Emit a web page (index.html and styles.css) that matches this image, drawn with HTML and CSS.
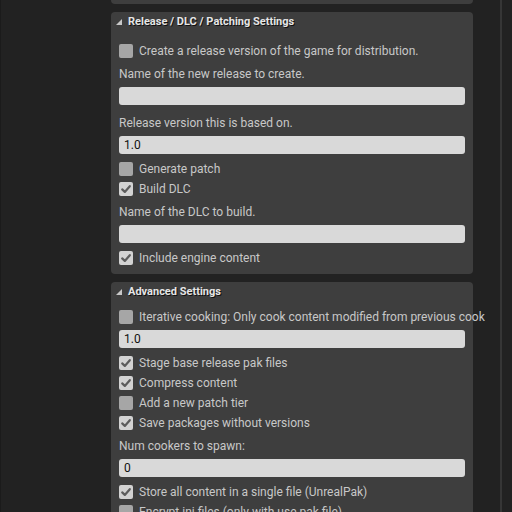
FILE: index.html
```html
<!DOCTYPE html>
<html>
<head>
<meta charset="utf-8">
<link rel="stylesheet" href="styles.css">
</head>
<body>
<div class="page">
  <div class="gutter"></div>
  <div class="column">
    <div class="panel stub"></div>

    <section class="panel">
      <div class="panel-header">
        <svg class="arrow" width="6" height="6" viewBox="0 0 6 6"><polygon points="6,0 6,6 0,6"/></svg>
        <span>Release / DLC / Patching Settings</span>
      </div>
      <div class="panel-body first">
        <div class="check-row"><span class="box"></span><span>Create a release version of the game for distribution.</span></div>
        <div class="label-row">Name of the new release to create.</div>
        <div class="input"></div>
        <div class="label-row">Release version this is based on.</div>
        <div class="input">1.0</div>
        <div class="check-row"><span class="box"></span><span>Generate patch</span></div>
        <div class="check-row"><span class="box on"><svg viewBox="0 0 14 14"><path d="M3.2 7.4 L5.8 9.9 L10.8 4.2"/></svg></span><span>Build DLC</span></div>
        <div class="label-row">Name of the DLC to build.</div>
        <div class="input"></div>
        <div class="check-row"><span class="box on"><svg viewBox="0 0 14 14"><path d="M3.2 7.4 L5.8 9.9 L10.8 4.2"/></svg></span><span>Include engine content</span></div>
      </div>
    </section>

    <section class="panel">
      <div class="panel-header">
        <svg class="arrow" width="6" height="6" viewBox="0 0 6 6"><polygon points="6,0 6,6 0,6"/></svg>
        <span>Advanced Settings</span>
      </div>
      <div class="panel-body">
        <div class="check-row"><span class="box"></span><span class="nowrap">Iterative cooking: Only cook content modified from previous cook</span></div>
        <div class="input">1.0</div>
        <div class="check-row"><span class="box on"><svg viewBox="0 0 14 14"><path d="M3.2 7.4 L5.8 9.9 L10.8 4.2"/></svg></span><span>Stage base release pak files</span></div>
        <div class="check-row"><span class="box on"><svg viewBox="0 0 14 14"><path d="M3.2 7.4 L5.8 9.9 L10.8 4.2"/></svg></span><span>Compress content</span></div>
        <div class="check-row"><span class="box"></span><span>Add a new patch tier</span></div>
        <div class="check-row"><span class="box on"><svg viewBox="0 0 14 14"><path d="M3.2 7.4 L5.8 9.9 L10.8 4.2"/></svg></span><span>Save packages without versions</span></div>
        <div class="label-row">Num cookers to spawn:</div>
        <div class="input">0</div>
        <div class="check-row"><span class="box on"><svg viewBox="0 0 14 14"><path d="M3.2 7.4 L5.8 9.9 L10.8 4.2"/></svg></span><span>Store all content in a single file (UnrealPak)</span></div>
        <div class="check-row"><span class="box"></span><span>Encrypt ini files (only with use pak file)</span></div>
      </div>
    </section>
  </div>
  <div class="spacer"></div>
  <div class="divider"></div>
</div>
</body>
</html>
```
FILE: styles.css
```css
html, body {
  margin: 0;
  padding: 0;
  background: #222222;
  overflow: hidden;
}
body {
  font-family: Roboto, "Noto Sans", "Liberation Sans", sans-serif;
  font-size: 12px;
  color: #c8c8c8;
}
.page {
  display: flex;
  height: 512px;
  overflow: hidden;
}
.gutter {
  width: 111px;
  flex: none;
  border-left: 1px solid #1b1b1b;
  box-sizing: border-box;
}
.column {
  width: 362px;
  flex: none;
  display: flex;
  flex-direction: column;
  gap: 8px;
}
.spacer {
  width: 27px;
  flex: none;
}
.divider {
  width: 2px;
  flex: none;
  background: #363636;
}
.panel {
  background: #3e3e3e;
  border-radius: 4px;
}
.panel.stub {
  height: 4px;
  border-radius: 0 0 4px 4px;
  flex: none;
}
.panel-header {
  height: 18px;
  display: flex;
  align-items: center;
  gap: 6px;
  padding-left: 5px;
  font-size: 11px;
  font-weight: bold;
  color: #e6e6e6;
  text-shadow: 1px 1px 0 #111;
}
.arrow {
  fill: #c8c8c8;
  margin-top: 1px;
}
.panel-body {
  padding: 7px 8px 6px;
  display: flex;
  flex-direction: column;
}
.panel-body.first {
  padding-top: 11px;
}
.check-row {
  height: 20px;
  display: flex;
  align-items: center;
  gap: 6px;
  white-space: nowrap;
}
.box {
  width: 14px;
  height: 14px;
  flex: none;
  border-radius: 2px;
  background: #a6a6a6;
}
.box.on {
  background: #d2d2d2;
}
.box svg {
  display: block;
  width: 14px;
  height: 14px;
  fill: none;
  stroke: #5c5c5c;
  stroke-width: 2.2;
  stroke-linecap: round;
  stroke-linejoin: round;
}
.label-row {
  height: 20px;
  line-height: 20px;
  white-space: nowrap;
}
.input {
  height: 18px;
  line-height: 18px;
  background: #d9d9d9;
  border-radius: 3px;
  color: #111;
  padding-left: 5px;
}
.check-row + .label-row { margin-top: 3px; }
.input + .label-row { margin-top: 8px; }
.label-row + .input { margin-top: 3px; }
.check-row + .input { margin-top: 3px; }
.input + .check-row { margin-top: 5px; }
```
